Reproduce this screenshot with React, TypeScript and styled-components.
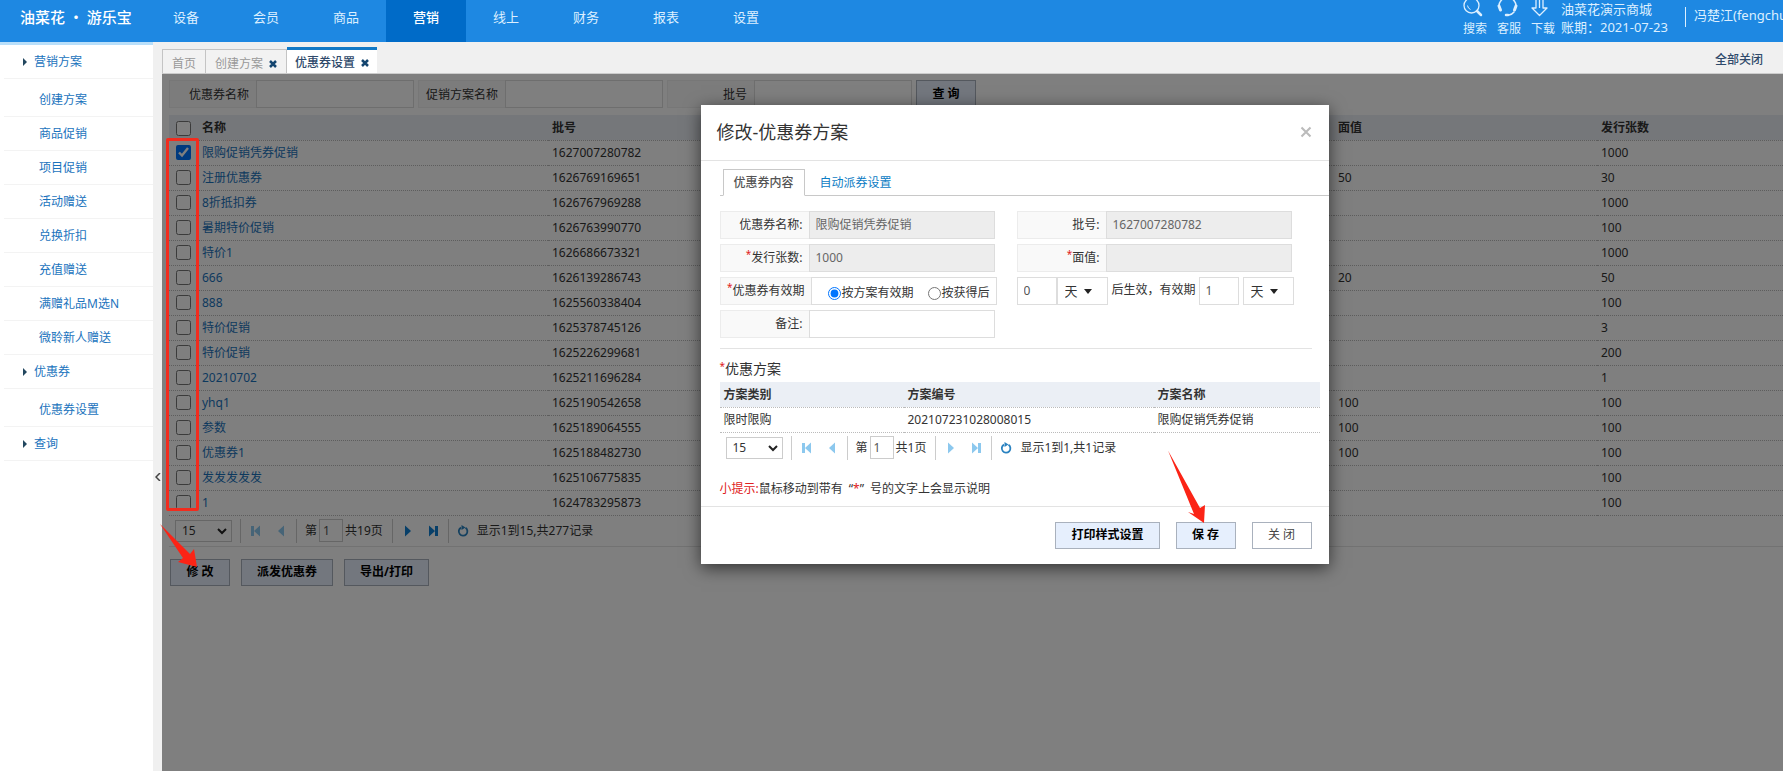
import React from 'react';
import styled, { createGlobalStyle, css } from 'styled-components';

const GlobalStyle = createGlobalStyle`
  *, *::before, *::after { box-sizing: border-box; }
  body {
    margin: 0;
    background: #fff;
    color: #333;
    font: 12px/18px "Noto Sans", "Noto Sans CJK SC", sans-serif;
    overflow-x: hidden;
  }
  button, input, select { font: inherit; color: inherit; margin: 0; }
  a { color: #1a73bd; text-decoration: none; }
  ul { list-style: none; margin: 0; padding: 0; }
`;

const Page = styled.div`
  display: flex;
  flex-direction: column;
  min-height: 100vh;
  overflow: hidden;
`;

/* ---------- top bar ---------- */

const TopBar = styled.header`
  display: flex;
  height: 42px;
  background: #1e88e2;
  color: #fff;
`;

const Logo = styled.h1`
  flex: 0 0 146px;
  margin: 0;
  padding-left: 20px;
  font-family: "Noto Sans CJK SC", sans-serif;
  font-size: 15px;
  line-height: 34px;
  font-weight: 500;
  white-space: pre;
`;

const MainNav = styled.nav`
  display: flex;
`;

const NavLink = styled.a<{ $active?: boolean }>`
  width: 80px;
  height: 42px;
  font-size: 13px;
  line-height: 34px;
  text-align: center;
  color: ${p => (p.$active ? '#fff' : '#dcefff')};
  font-weight: ${p => (p.$active ? 500 : 400)};
  background: ${p => (p.$active ? '#006bc8' : 'transparent')};
`;

const TopRight = styled.div`
  display: flex;
  margin-left: auto;
  color: #dcefff;
`;

const Tools = styled.div`
  display: flex;
  gap: 10px;
`;

const Tool = styled.a`
  width: 24px;
  color: #dcefff;
  svg { display: block; height: 18px; }
  span { display: block; line-height: 22px; }
`;

const Shop = styled.div`
  width: 124px;
  margin-left: 6px;
  font-size: 13px;
  line-height: 18px;
  white-space: nowrap;
`;

const UserName = styled.div`
  width: 98px;
  height: 20px;
  margin-top: 7px;
  padding-left: 8px;
  border-left: 1px solid #dcefff;
  font-size: 13px;
  line-height: 16px;
  white-space: nowrap;
`;

/* ---------- side menu ---------- */

const Body = styled.div`
  display: flex;
  flex: 1;
`;

const Side = styled.aside`
  flex: 0 0 153px;
  border-top: 3px solid #b9dffa;
  background: #fff;
`;

const MenuRow = styled.a<{ $group?: boolean; $first?: boolean }>`
  display: flex;
  align-items: center;
  gap: 7px;
  height: ${p => (p.$first ? 38 : 34)}px;
  margin-left: 4px;
  padding-top: ${p => (p.$first ? 4 : 0)}px;
  padding-left: ${p => (p.$group ? 19 : 35)}px;
  border-bottom: 1px solid #f3f3f3;
  svg { color: #22475f; }
`;

const Splitter = styled.button`
  display: flex;
  flex: 0 0 9px;
  align-items: center;
  justify-content: center;
  padding: 140px 0 0;
  border: 0;
  background: #f0f0f0;
  color: #444;
`;

/* ---------- tabs ---------- */

const Main = styled.main`
  display: flex;
  flex: 1;
  flex-direction: column;
  min-width: 0;
`;

const TabBar = styled.div`
  display: flex;
  align-items: flex-end;
  height: 32px;
  border-bottom: 1px solid #ccc;
  background: #f0f0f0;
`;

const PageTab = styled.div<{ $active?: boolean }>`
  display: flex;
  align-items: center;
  gap: 6px;
  height: ${p => (p.$active ? 26 : 24)}px;
  padding: 4px 9px 0;
  border: 1px solid #c4c4c4;
  border-width: 1px 1px 0;
  background: #f2f2f2;
  color: #999;
  & + & { border-left-width: 0; }
  ${p =>
    p.$active &&
    css`
      padding: 2px 8px 0;
      border: 0;
      border-top: 3px solid #1279c6;
      background: #fff;
      color: #2f4a6b;
      font-weight: 500;
    `}
`;

const TabClose = styled.button`
  display: flex;
  padding: 0;
  border: 0;
  background: none;
  color: #14456f;
`;

const CloseAll = styled.button`
  margin: 0 20px 4px auto;
  padding: 0;
  border: 0;
  background: none;
  color: #2f4a6b;
  font-weight: 500;
`;

/* ---------- shared controls ---------- */

const Button = styled.button<{ $plain?: boolean }>`
  height: 27px;
  min-width: 60px;
  padding: 0 15px;
  border: 1px solid #a9b1bd;
  background: ${p => (p.$plain ? '#fff' : '#e6effd')};
  color: ${p => (p.$plain ? '#444' : '#000')};
  font-weight: ${p => (p.$plain ? 400 : 700)};
  line-height: 18px;
  white-space: nowrap;
`;

const TextBox = styled.input`
  min-width: 0;
  padding: 0 6px;
  border: 1px solid #ddd;
  border-radius: 0;
  background: #fff;
  color: #555;
  outline: 0;
  &:disabled { background: #ededed; color: #666; }
`;

const Grid = styled.table`
  width: 100%;
  border-collapse: collapse;
  table-layout: fixed;
  th, td {
    height: 25px;
    padding: 0 4px;
    border-bottom: 1px dotted #bbb;
    text-align: left;
    white-space: nowrap;
  }
  th { padding-top: 2px; background: #ebeff5; font-weight: 700; }
`;

const PagerBar = styled.div`
  display: flex;
  align-items: center;
  height: 30px;
  padding-left: 6px;
`;

const PageSize = styled.div`
  position: relative;
  width: 57px;
  margin-right: 8px;
  select {
    width: 100%;
    height: 22px;
    padding: 0 6px;
    border: 1px solid #ccc;
    border-radius: 0;
    background: #fff;
    appearance: none;
    display: block;
  }
  svg { position: absolute; right: 5px; top: 7px; pointer-events: none; }
`;

const PagerGroup = styled.div`
  display: flex;
  align-items: center;
  height: 24px;
  border-left: 1px solid #ccc;
  padding: 0 9px 0 8px;
`;

const PagerButtons = styled(PagerGroup)`
  width: 56px;
  padding: 0 10px;
  justify-content: space-between;
`;

const IconButton = styled.button<{ $dim?: boolean }>`
  display: flex;
  padding: 0;
  border: 0;
  background: none;
  color: ${p => (p.$dim ? '#8cc8ee' : '#0f7fd2')};
`;

const PageNo = styled(TextBox)`
  width: 24px;
  height: 23px;
  padding: 0 3px;
  margin: 0 2px;
  border-color: #ccc;
`;

const RefreshLabel = styled.span`
  margin-left: 8px;
`;

/* ---------- content ---------- */

const Content = styled.div`
  position: relative;
  flex: 1;
  padding: 6px 0 0 7px;
  background: #fff;
`;

const SearchBar = styled.form`
  display: flex;
  gap: 4px;
  margin-bottom: 7px;
`;

const SearchField = styled.label`
  display: flex;
  width: 245px;
  height: 28px;
  span {
    width: 87px;
    padding-right: 7px;
    border: 1px solid #eee;
    border-right: 0;
    background: #f9f9f9;
    line-height: 28px;
    text-align: right;
  }
  input { flex: 1; }
`;

const Check = styled.input`
  display: block;
  width: 15px;
  height: 15px;
  margin: 0 0 0 3px;
`;

const PagerWrap = styled.div`
  border-bottom: 1px solid #e4e4e4;
`;

const Actions = styled.div`
  display: flex;
  gap: 11px;
  padding: 12px 0 0 1px;
`;

const Shade = styled.div`
  position: absolute;
  inset: 0;
  background: rgba(0, 0, 0, 0.5);
`;

const MarkBox = styled.div`
  position: absolute;
  left: 4px;
  top: 64px;
  width: 33px;
  height: 373px;
  border: 3px solid #f22c1e;
  border-radius: 2px;
`;

const RowArrow = styled.svg`
  position: absolute;
  left: -2px;
  top: 450px;
`;

const SaveArrow = styled.svg`
  position: absolute;
  right: 123px;
  bottom: 41px;
`;

/* ---------- dialog ---------- */

const Dialog = styled.section`
  position: absolute;
  left: calc(50% - 272px);
  top: 31px;
  width: 628px;
  background: #fff;
  box-shadow: 0 4px 16px rgba(0, 0, 0, 0.6);
`;

const DialogHead = styled.div`
  display: flex;
  align-items: center;
  justify-content: space-between;
  height: 56px;
  padding: 0 17px 2px 16px;
  border-bottom: 1px solid #e3e3e3;
  h2 { margin: 0; font-size: 18px; line-height: 24px; font-weight: 400; }
  button { display: flex; padding: 0; border: 0; background: none; color: #bbb; }
`;

const DialogTabs = styled.div`
  display: flex;
  margin: 8px 0 0 19px;
  padding-left: 3px;
  border-bottom: 1px solid #c8c8c8;
`;

const DialogTab = styled.button<{ $active?: boolean }>`
  height: 27px;
  margin-bottom: -1px;
  padding: 0 10px;
  border: 1px solid transparent;
  background: none;
  color: #0c7cc4;
  margin-right: 4px;
  ${p =>
    p.$active &&
    css`
      border-color: #c8c8c8;
      border-bottom-color: #fff;
      background: #fff;
      color: #555;
      font-weight: 500;
    `}
`;

const FormGrid = styled.div`
  display: grid;
  grid-template-columns: 275px 277px;
  gap: 5px 22px;
  margin: 15px 0 0 19px;
`;

const Cell = styled.div`
  display: flex;
  height: 28px;
`;

const Label = styled.label`
  flex: 0 0 89px;
  padding-right: 6px;
  border: 1px solid #ececec;
  border-right: 0;
  background: #f9f9f9;
  line-height: 26px;
  text-align: right;
  white-space: nowrap;
`;

const WideLabel = styled(Label)`
  flex-basis: 91px;
`;

const Star = styled.sup`
  color: #e02020;
  line-height: 0;
  font-size: 10px;
  vertical-align: 4px;
`;

const FieldBox = styled(TextBox)`
  width: 186px;
`;

const Radios = styled.div`
  display: flex;
  align-items: center;
  gap: 14px;
  flex: 0 0 186px;
  padding: 4px 0 0 16px;
  border: 1px solid #ddd;
  white-space: nowrap;
  label { display: flex; align-items: center; }
  input { width: 13px; height: 13px; margin-right: 1px; }
`;

const NumberBox = styled(TextBox)`
  flex: 0 0 40px;
`;

const UnitSelect = styled.div<{ $joined?: boolean }>`
  position: relative;
  flex: 0 0 51px;
  margin-left: ${p => (p.$joined ? 0 : 4)}px;
  select {
    width: 100%;
    height: 28px;
    padding: 0 7px;
    border: 1px solid #ddd;
    border-radius: 0;
    background: #fff;
    font-size: 13px;
    appearance: none;
    display: block;
  }
  svg { position: absolute; right: 16px; top: 12px; pointer-events: none; }
`;

const Between = styled.span`
  flex: 0 0 91px;
  padding-left: 4px;
  line-height: 26px;
  white-space: nowrap;
`;

const PlanSection = styled.div`
  margin: 10px 17px 0 19px;
  border-top: 1px solid #e3e3e3;
  h3 {
    margin: 7px 0 0;
    height: 26px;
    font-size: 14px;
    line-height: 25px;
    font-weight: 400;
  }
`;

const PlanTable = styled.div`
  margin-right: -8px;
`;

const Hint = styled.p`
  margin: 0 0 8px 19px;
  padding-top: 17px;
  em { color: #e02020; font-style: normal; }
  i { padding: 0 6px; font-style: normal; }
`;

const DialogFoot = styled.div`
  display: flex;
  justify-content: flex-end;
  gap: 16px;
  padding: 15px 17px;
  border-top: 1px solid #e3e3e3;
`;

/* ---------- icons ---------- */

const Triangle = () => (
  <svg width="4" height="8" viewBox="0 0 4 8"><path d="M0 0l4 4-4 4z" fill="currentColor" /></svg>
);

const Cross = ({ size, weight }: { size: number; weight: number }) => (
  <svg width={size} height={size} viewBox="0 0 8 8">
    <path d="M1 1l6 6M7 1l-6 6" stroke="currentColor" strokeWidth={weight} />
  </svg>
);

const Chevron = () => (
  <svg width="10" height="8" viewBox="0 0 10 8">
    <path d="M1 2l4 4 4-4" fill="none" stroke="#222" strokeWidth="2" />
  </svg>
);

const Caret = () => (
  <svg width="8" height="5" viewBox="0 0 8 5"><path d="M0 0h8L4 5z" fill="#222" /></svg>
);

const StepIcon = ({ back, end }: { back?: boolean; end?: boolean }) => (
  <svg width="9" height="12" viewBox="0 0 9 12">
    <g fill="currentColor" transform={back ? 'matrix(-1 0 0 1 9 0)' : undefined}>
      {end ? <path d="M0 0.500L6 6L0 11.500zM6 1h3v10H6z" /> : <path d="M2 0.500L8 6L2 11.500z" />}
    </g>
  </svg>
);

const RefreshIcon = () => (
  <svg width="12" height="12" viewBox="0 0 12 12">
    <path d="M8.500 2.800A4.300 4.300 0 1 1 4 2.600" fill="none" stroke="#2a82c0" strokeWidth="1.800" />
    <path d="M4.500 0l4 2.500L4.500 5z" fill="#2a82c0" />
  </svg>
);

const SearchIcon = () => (
  <svg width="24" height="18" viewBox="0 0 24 18" fill="none" stroke="currentColor">
    <circle cx="8.500" cy="5.500" r="7.500" strokeWidth="1.300" />
    <path d="M4.500 5.500a5 5 0 0 0 3 4" strokeWidth="1" />
    <path d="M14 11l4 4" strokeWidth="2.500" strokeLinecap="round" />
  </svg>
);

const SupportIcon = () => (
  <svg width="24" height="18" viewBox="0 0 24 18" fill="none" stroke="currentColor" strokeLinecap="round">
    <path d="M2 6a8.500 8.500 0 0 1 17 0" strokeWidth="1.500" />
    <path d="M2 6l1.500 4M19 6l-1.500 4" strokeWidth="3" />
    <path d="M17 12a8 8 0 0 1-5 3" strokeWidth="1.500" />
    <path d="M9 15h2" strokeWidth="2.500" />
  </svg>
);

const DownloadIcon = () => (
  <svg width="24" height="18" viewBox="0 0 24 18" fill="none" stroke="currentColor" strokeLinejoin="round">
    <path d="M5 -2V8H1l7.500 7.500L16 8h-4V-2M8.500 -2v10" strokeWidth="1.300" />
  </svg>
);

/* ---------- data ---------- */

const navItems = ['设备', '会员', '商品', '营销', '线上', '财务', '报表', '设置'];

const menu = [
  {
    title: '营销方案',
    items: ['创建方案', '商品促销', '项目促销', '活动赠送', '兑换折扣', '充值赠送', '满赠礼品M选N', '微聆新人赠送'],
  },
  { title: '优惠券', items: ['优惠券设置'] },
  { title: '查询', items: [] as string[] },
];

const coupons = [
  ['限购促销凭券促销', '1627007280782', '', '1000'],
  ['注册优惠券', '1626769169651', '50', '30'],
  ['8折抵扣券', '1626767969288', '', '1000'],
  ['暑期特价促销', '1626763990770', '', '100'],
  ['特价1', '1626686673321', '', '1000'],
  ['666', '1626139286743', '20', '50'],
  ['888', '1625560338404', '', '100'],
  ['特价促销', '1625378745126', '', '3'],
  ['特价促销', '1625226299681', '', '200'],
  ['20210702', '1625211696284', '', '1'],
  ['yhq1', '1625190542658', '100', '100'],
  ['参数', '1625189064555', '100', '100'],
  ['优惠券1', '1625188482730', '100', '100'],
  ['发发发发发', '1625106775835', '', '100'],
  ['1', '1624783295873', '', '100'],
];

type PagerProps = { total: string; summary: string; last?: boolean };

const Pager = ({ total, summary, last }: PagerProps) => (
  <PagerBar>
    <PageSize>
      <select aria-label="每页条数" defaultValue="15"><option>15</option></select>
      <Chevron />
    </PageSize>
    <PagerButtons>
      <IconButton type="button" $dim aria-label="首页"><StepIcon back end /></IconButton>
      <IconButton type="button" $dim aria-label="上一页"><StepIcon back /></IconButton>
    </PagerButtons>
    <PagerGroup>
      第<PageNo aria-label="页码" defaultValue="1" />{total}
    </PagerGroup>
    <PagerButtons>
      <IconButton type="button" $dim={last} aria-label="下一页"><StepIcon /></IconButton>
      <IconButton type="button" $dim={last} aria-label="末页"><StepIcon end /></IconButton>
    </PagerButtons>
    <PagerGroup>
      <IconButton type="button" aria-label="刷新"><RefreshIcon /></IconButton>
      <RefreshLabel>{summary}</RefreshLabel>
    </PagerGroup>
  </PagerBar>
);

const CouponDialog = () => (
  <Dialog role="dialog" aria-labelledby="dialog-title">
    <DialogHead>
      <h2 id="dialog-title">修改-优惠券方案</h2>
      <button type="button" aria-label="关闭"><Cross size={12} weight={1.4} /></button>
    </DialogHead>
    <DialogTabs>
      <DialogTab type="button" $active>优惠券内容</DialogTab>
      <DialogTab type="button">自动派券设置</DialogTab>
    </DialogTabs>
    <FormGrid>
      <Cell>
        <Label htmlFor="name">优惠券名称:</Label>
        <FieldBox id="name" disabled defaultValue="限购促销凭券促销" />
      </Cell>
      <Cell>
        <Label htmlFor="batch">批号:</Label>
        <FieldBox id="batch" disabled defaultValue="1627007280782" />
      </Cell>
      <Cell>
        <Label htmlFor="count"><Star>*</Star>发行张数:</Label>
        <FieldBox id="count" disabled defaultValue="1000" />
      </Cell>
      <Cell>
        <Label htmlFor="value"><Star>*</Star>面值:</Label>
        <FieldBox id="value" disabled />
      </Cell>
      <Cell>
        <WideLabel as="span"><Star>*</Star>优惠券有效期</WideLabel>
        <Radios>
          <label><input type="radio" name="valid" defaultChecked />按方案有效期</label>
          <label><input type="radio" name="valid" />按获得后</label>
        </Radios>
      </Cell>
      <Cell>
        <NumberBox aria-label="生效时间" defaultValue="0" />
        <UnitSelect $joined>
          <select aria-label="生效单位"><option>天</option></select>
          <Caret />
        </UnitSelect>
        <Between>后生效，有效期</Between>
        <NumberBox aria-label="有效期" defaultValue="1" />
        <UnitSelect>
          <select aria-label="有效期单位"><option>天</option></select>
          <Caret />
        </UnitSelect>
      </Cell>
      <Cell>
        <Label htmlFor="remark">备注:</Label>
        <FieldBox id="remark" />
      </Cell>
    </FormGrid>
    <PlanSection>
      <h3><Star>*</Star>优惠方案</h3>
      <PlanTable>
        <Grid>
          <colgroup><col style={{ width: 184 }} /><col style={{ width: 250 }} /><col /></colgroup>
          <thead><tr><th>方案类别</th><th>方案编号</th><th>方案名称</th></tr></thead>
          <tbody><tr><td>限时限购</td><td>202107231028008015</td><td>限购促销凭券促销</td></tr></tbody>
        </Grid>
      </PlanTable>
      <Pager total="共1页" summary="显示1到1,共1记录" last />
    </PlanSection>
    <Hint><em>小提示:</em>鼠标移动到带有<i>“<em>*</em>”</i>号的文字上会显示说明</Hint>
    <DialogFoot>
      <Button type="button">打印样式设置</Button>
      <Button type="button">保 存</Button>
      <Button type="button" $plain>关 闭</Button>
    </DialogFoot>
    <SaveArrow width="38" height="73" viewBox="0 0 38 73" aria-hidden="true">
      <path d="M0 0.500L26 64L20 62L36 73L37 55L32 58Z" fill="#fb2416" />
    </SaveArrow>
  </Dialog>
);

const CouponTable = () => (
  <Grid>
    <colgroup>
      <col style={{ width: 29 }} /><col style={{ width: 350 }} /><col style={{ width: 786 }} />
      <col style={{ width: 263 }} /><col />
    </colgroup>
    <thead>
      <tr>
        <th><Check type="checkbox" aria-label="全选" /></th>
        <th>名称</th><th>批号</th><th>面值</th><th>发行张数</th>
      </tr>
    </thead>
    <tbody>
      {coupons.map(([name, batch, value, count], i) => (
        <tr key={batch}>
          <td><Check type="checkbox" aria-label={name} defaultChecked={i === 0} /></td>
          <td><a href="#edit">{name}</a></td>
          <td>{batch}</td><td>{value}</td><td>{count}</td>
        </tr>
      ))}
    </tbody>
  </Grid>
);

export default function App() {
  return (
    <Page>
      <GlobalStyle />
      <TopBar>
        <Logo>油菜花 · 游乐宝</Logo>
        <MainNav>
          {navItems.map(item => (
            <NavLink key={item} href="#nav" $active={item === '营销'}>{item}</NavLink>
          ))}
        </MainNav>
        <TopRight>
          <Tools>
            <Tool href="#search"><SearchIcon /><span>搜索</span></Tool>
            <Tool href="#support"><SupportIcon /><span>客服</span></Tool>
            <Tool href="#download"><DownloadIcon /><span>下载</span></Tool>
          </Tools>
          <Shop>油菜花演示商城<br />账期：2021-07-23</Shop>
          <UserName>冯楚江(fengchu</UserName>
        </TopRight>
      </TopBar>
      <Body>
        <Side>
          {menu.map(group => (
            <div key={group.title}>
              <MenuRow href="#group" $group><Triangle />{group.title}</MenuRow>
              {group.items.map((item, i) => (
                <MenuRow key={item} href="#item" $first={i === 0}>{item}</MenuRow>
              ))}
            </div>
          ))}
        </Side>
        <Splitter type="button" aria-label="收起菜单">
          <svg width="6" height="8" viewBox="0 0 6 8">
            <path d="M5 0L1 4l4 4" fill="none" stroke="currentColor" strokeWidth="1.500" />
          </svg>
        </Splitter>
        <Main>
          <TabBar>
            <PageTab>首页</PageTab>
            <PageTab>创建方案<TabClose aria-label="关闭"><Cross size={8} weight={2.5} /></TabClose></PageTab>
            <PageTab $active>优惠券设置<TabClose aria-label="关闭"><Cross size={8} weight={2.5} /></TabClose></PageTab>
            <CloseAll type="button">全部关闭</CloseAll>
          </TabBar>
          <Content>
            <SearchBar>
              <SearchField><span>优惠券名称</span><TextBox /></SearchField>
              <SearchField><span>促销方案名称</span><TextBox /></SearchField>
              <SearchField><span>批号</span><TextBox /></SearchField>
              <Button type="button">查 询</Button>
            </SearchBar>
            <CouponTable />
            <PagerWrap>
              <Pager total="共19页" summary="显示1到15,共277记录" />
            </PagerWrap>
            <Actions>
              <Button type="button">修 改</Button>
              <Button type="button">派发优惠券</Button>
              <Button type="button">导出/打印</Button>
            </Actions>
            <Shade />
            <MarkBox />
            <RowArrow width="38" height="44" viewBox="0 0 38 44" aria-hidden="true">
              <path d="M0 0L30 30L34 25L37 43L18 38L23 34Z" fill="#fb2416" />
            </RowArrow>
            <CouponDialog />
          </Content>
        </Main>
      </Body>
    </Page>
  );
}
